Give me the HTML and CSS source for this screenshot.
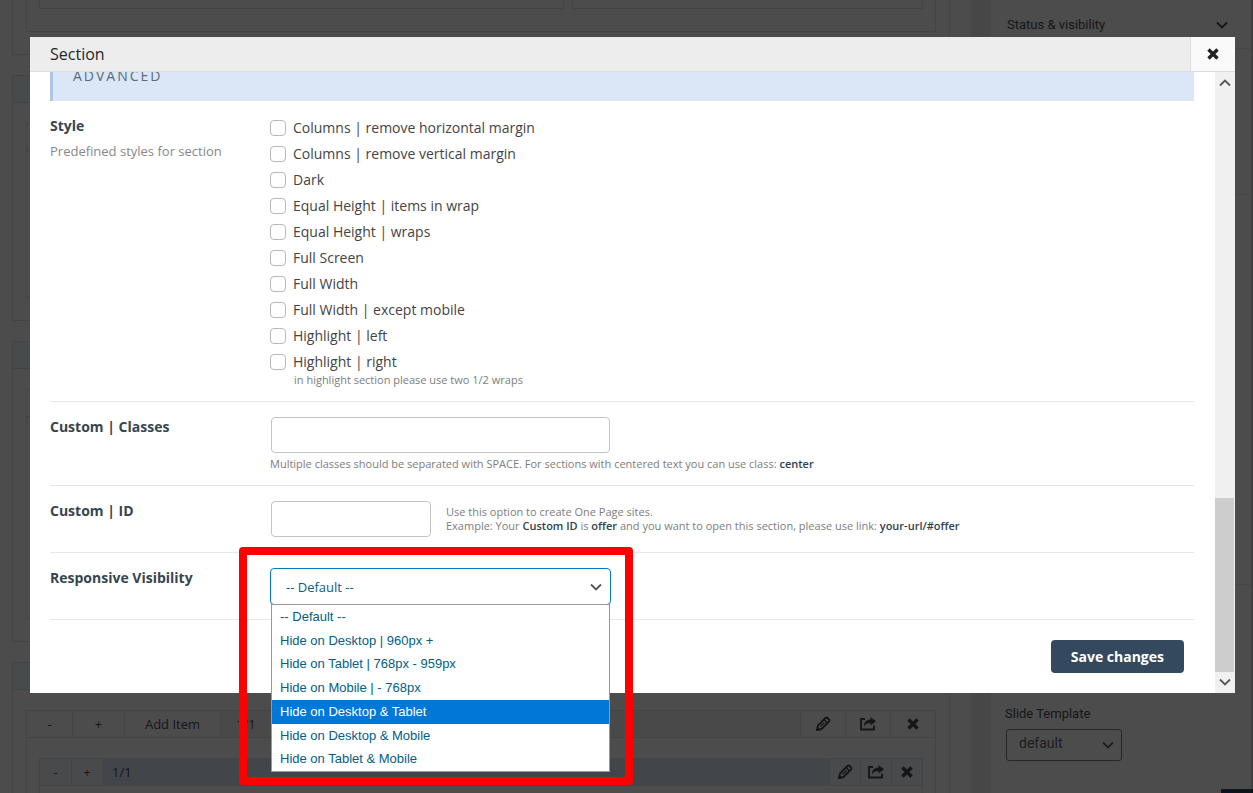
FILE: index.html
```html
<!DOCTYPE html>
<html lang="en">
<head>
<meta charset="utf-8">
<meta name="viewport" content="width=device-width, initial-scale=1">
<title>Section</title>
<link rel="stylesheet" href="styles.css">
</head>
<body>
<svg class="defs" aria-hidden="true">
  <symbol id="pencil" viewBox="0 0 16 16"><path fill="none" stroke="currentColor" stroke-width="1.800" stroke-linejoin="round" d="M2 14l1-4.500 7.500-7.500q1-1 2 0l1.500 1.500q1 1 0 2l-7.500 7.500z"/><path fill="none" stroke="currentColor" stroke-width="1.200" d="M9 3.500l3.500 3.500M5.500 10.500l4-4"/><path fill="currentColor" d="M1 15l1.200-4.500 3.500 3.500z"/></symbol>
  <symbol id="share" viewBox="0 0 16 16"><path fill="none" stroke="currentColor" stroke-width="1.800" d="M5 3H1v10.500h13v-4"/><path fill="currentColor" d="M10.500 1L16 5.200 10.500 9.400V7C7.500 7 5.500 7.800 4 10.500c0-4.300 2-6.500 6.500-6.900z"/></symbol>
  <symbol id="cross" viewBox="0 0 12 12"><path fill="none" stroke="currentColor" stroke-width="3.400" d="M1.500 1.500l9 9M10.500 1.500l-9 9"/></symbol>
  <symbol id="chevron" viewBox="0 0 12 8"><path fill="none" stroke="currentColor" stroke-width="1.800" d="M1 1.500l5 5 5-5"/></symbol>
</svg>

<div class="page">
  <main class="builder">
    <section class="block block-first"><div class="wrap"><div class="item item-wide"></div><div class="item"></div></div></section>
    <section class="block block-mid"><div class="block-head"></div><div class="wrap"><div class="wrap-head"></div></div></section>
    <section class="block block-tall"><div class="block-head"></div><div class="wrap"><div class="wrap-head"></div></div></section>
    <section class="block block-last">
      <div class="block-head"></div>
      <div class="wrap">
        <div class="toolbar wrap-bar">
          <button type="button">-</button>
          <button type="button">+</button>
          <button type="button" class="add">Add Item</button>
          <span class="size">1/1</span>
          <button type="button" aria-label="Edit"><svg class="icon"><use href="#pencil"/></svg></button>
          <button type="button" aria-label="Export"><svg class="icon"><use href="#share"/></svg></button>
          <button type="button" aria-label="Delete"><svg class="icon-x"><use href="#cross"/></svg></button>
        </div>
        <div class="item">
          <div class="toolbar item-bar">
            <button type="button">-</button>
            <button type="button">+</button>
            <span class="size">1/1</span>
            <button type="button" aria-label="Edit"><svg class="icon"><use href="#pencil"/></svg></button>
            <button type="button" aria-label="Export"><svg class="icon"><use href="#share"/></svg></button>
            <button type="button" aria-label="Delete"><svg class="icon-x"><use href="#cross"/></svg></button>
          </div>
        </div>
      </div>
    </section>
  </main>
  <aside class="sidebar">
    <button type="button" class="panel-toggle">Status &amp; visibility <svg class="chev"><use href="#chevron"/></svg></button>
    <div class="panel panel-short"></div>
    <div class="panel panel-long"></div>
    <div class="panel-field">
      <label for="template">Slide Template</label>
      <div class="template-box">
        <select id="template"><option>default</option></select>
        <svg class="chev"><use href="#chevron"/></svg>
      </div>
    </div>
    <div class="corner"></div>
  </aside>
</div>

<div class="modal" role="dialog" aria-labelledby="modal-title">
  <header class="modal-head">
    <h1 id="modal-title">Section</h1>
    <button type="button" class="close" aria-label="Close"><svg class="icon-x"><use href="#cross"/></svg></button>
  </header>
  <div class="modal-body">
    <form class="form">
      <h2 class="group-title">Advanced</h2>
      <div class="row row-style">
        <div class="row-label"><h3>Style</h3><p>Predefined styles for section</p></div>
        <div class="row-field">
          <ul class="checks">
            <li><label><input type="checkbox">Columns | remove horizontal margin</label></li>
            <li><label><input type="checkbox">Columns | remove vertical margin</label></li>
            <li><label><input type="checkbox">Dark</label></li>
            <li><label><input type="checkbox">Equal Height | items in wrap</label></li>
            <li><label><input type="checkbox">Equal Height | wraps</label></li>
            <li><label><input type="checkbox">Full Screen</label></li>
            <li><label><input type="checkbox">Full Width</label></li>
            <li><label><input type="checkbox">Full Width | except mobile</label></li>
            <li><label><input type="checkbox">Highlight | left</label></li>
            <li><label><input type="checkbox">Highlight | right</label></li>
          </ul>
          <p class="hint hint-indent">in highlight section please use two 1/2 wraps</p>
        </div>
      </div>
      <div class="row row-classes">
        <div class="row-label"><h3><label for="classes">Custom | Classes</label></h3></div>
        <div class="row-field">
          <input id="classes" type="text" class="text-input wide">
          <p class="hint hint-below">Multiple classes should be separated with SPACE. For sections with centered text you can use class: <b>center</b></p>
        </div>
      </div>
      <div class="row">
        <div class="row-label"><h3><label for="cid">Custom | ID</label></h3></div>
        <div class="row-field inline">
          <input id="cid" type="text" class="text-input narrow">
          <p class="hint">Use this option to create One Page sites.<br>Example: Your <b>Custom ID</b> is <b>offer</b> and you want to open this section, please use link: <b>your-url/#offer</b></p>
        </div>
      </div>
      <div class="row">
        <div class="row-label"><h3><label for="visibility">Responsive Visibility</label></h3></div>
        <div class="row-field">
          <div class="select-box">
            <select id="visibility"><option>-- Default --</option></select>
            <svg class="chev"><use href="#chevron"/></svg>
            <ul class="menu" role="listbox" aria-label="Responsive Visibility">
              <li role="option">-- Default --</li>
              <li role="option">Hide on Desktop | 960px +</li>
              <li role="option">Hide on Tablet | 768px - 959px</li>
              <li role="option">Hide on Mobile | - 768px</li>
              <li role="option" class="active" aria-selected="true">Hide on Desktop &amp; Tablet</li>
              <li role="option">Hide on Desktop &amp; Mobile</li>
              <li role="option">Hide on Tablet &amp; Mobile</li>
            </ul>
            <div class="marker"></div>
          </div>
        </div>
      </div>
      <div class="actions"><button type="button" class="save">Save changes</button></div>
    </form>
    <div class="scrollbar" aria-hidden="true">
      <svg class="chev up"><use href="#chevron"/></svg>
      <div class="track"><div class="thumb"></div></div>
      <svg class="chev"><use href="#chevron"/></svg>
    </div>
  </div>
</div>
</body>
</html>
```
FILE: styles.css
```css
* { box-sizing: border-box; }
body {
  margin: 0;
  height: 100vh;
  overflow: hidden;
  background: #4c4c4c;
  font: 14px/20px "Open Sans", sans-serif;
  color: #444;
}
h1, h2, h3, p, ul { margin: 0; padding: 0; font-weight: 400; }
ul { list-style: none; }
button, input, select { font: inherit; color: inherit; margin: 0; }
b { font-weight: 600; color: #2f3f4d; }
.defs { position: absolute; width: 0; height: 0; }
.icon { width: 16px; height: 16px; display: block; }
.icon-x { width: 12px; height: 12px; display: block; }
.chev { width: 12px; height: 8px; display: block; }

/* Dimmed editor behind the dialog */
.page { display: flex; height: 100%; overflow: hidden; color: #161616; }
.builder { flex: 1; padding: 0 21px 0 12px; }
.block { border: 1px solid #444; padding: 0 13px; margin-bottom: 20px; }
.wrap, .item { border: 1px solid #444; }
.block-first { height: 55px; border-top: 0; }
.block-first .wrap { display: flex; gap: 8px; height: 32px; border-top: 0; padding: 0 12px; }
.block-first .item { flex: 2; height: 9px; border-top: 0; }
.block-first .item-wide { flex: 3; }
.block-mid { height: 246px; }
.block-mid .wrap { height: 175px; }
.block-tall { height: 301px; }
.block-tall .wrap { height: 230px; }
.block-last { height: 300px; }
.block-head { height: 27px; margin: 0 -13px 20px; background: #464b4b; border-bottom: 1px solid #404444; }
.wrap-head { height: 27px; border-bottom: 1px solid #444; }
.block-last .wrap { height: 260px; }
.block-last .item { height: 200px; margin: 20px 12px 0; }
.toolbar { display: flex; height: 27px; border-bottom: 1px solid #444; }
.toolbar button {
  display: flex;
  align-items: center;
  justify-content: center;
  padding: 0;
  width: 45px;
  border: 0;
  border-left: 1px solid #444;
  background: none;
  font-size: 13px;
}
.toolbar button:first-child { border-left: 0; }
.toolbar .size { flex: 1; padding: 3px 15px; background: #494949; border-left: 1px solid #444; font-size: 13px; }
.wrap-bar button:nth-child(2) { width: 52px; }
.wrap-bar .add { width: 96px; }
.item-bar { background: #494a4c; }
.item-bar button { width: 31px; }
.item-bar .size { background: #424549; padding-left: 9px; border-color: #424549; }
.sidebar { position: relative; width: 282px; border-left: 20px solid #474747; border-right: 2px solid #404040; font-family: Roboto, sans-serif; font-size: 13px; }
.panel-toggle {
  display: flex;
  align-items: center;
  justify-content: space-between;
  width: 100%;
  height: 49px;
  padding: 1px 23px 0 16px;
  border: 0;
  border-bottom: 1px solid #464646;
  background: none;
}
.panel { border-bottom: 1px solid #464646; }
.panel-short { height: 146px; }
.panel-long { height: 390px; }
.panel-field { padding: 119px 14px 0; }
.panel-field label { display: block; line-height: 20px; }
.template-box { position: relative; width: 116px; margin: 5px 0 0 1px; font-size: 14px; color: #1b1d1f; }
.template-box select { appearance: none; display: block; width: 100%; height: 32px; padding: 0 12px 4px; background: none; border: 1px solid #252729; border-radius: 3px; }
.template-box .chev { position: absolute; right: 8px; top: 12px; }
.corner { position: absolute; right: -2px; bottom: 0; width: 32px; height: 4px; background: #0d151b; }

/* Dialog */
.modal { position: absolute; inset: 37px 18px 100px 30px; display: flex; flex-direction: column; background: #fff; }
.modal-head { display: flex; height: 35px; flex: none; background: #ededed; border-bottom: 1px solid #ddd; }
.modal-head h1 { flex: 1; padding-left: 20px; font-size: 16px; line-height: 34px; color: #23282d; }
.close { display: flex; align-items: center; justify-content: center; width: 45px; padding: 0; border: 0; border-left: 1px solid #ddd; background: #fafafa; color: #222; }
.modal-body { flex: 1; display: flex; min-height: 0; }
.form { flex: 1; padding: 0 21px 0 20px; }
.group-title {
  height: 29px;
  padding-left: 20px;
  border-left: 3px solid #b0c4e6;
  background: #dbe7f7;
  color: #5a6b7a;
  font-size: 14px;
  line-height: 8px;
  letter-spacing: 2px;
  text-transform: uppercase;
  overflow: hidden;
}
.row { display: flex; padding: 15px 0; border-bottom: 1px solid #e8e8e8; }
.row-label { width: 220px; flex: none; }
.row-label h3 { font-size: 14px; font-weight: 700; line-height: 20px; color: #36454f; }
.row-label p { margin-top: 5px; font-size: 13px; color: #888; }
.row-field { flex: 1; }
.row-style, .row-classes { padding-bottom: 14px; }
.checks { margin: -1px 0 -2px; }
.checks label { display: flex; align-items: center; height: 26px; gap: 7px; }
.checks input { appearance: none; width: 16px; height: 16px; border: 1px solid #b4b9be; border-radius: 4px; background: #fff; }
.hint { font-size: 11px; line-height: 14px; color: #7d7d7d; }
.hint-indent { padding-left: 24px; }
.hint-below { margin-top: 4px; }
.text-input { display: block; height: 36px; margin-left: 1px; border: 1px solid #c4c4c4; border-radius: 4px; background: #fff; padding: 0 10px; }
.wide { width: 339px; }
.narrow { width: 160px; }
.inline { display: flex; align-items: center; gap: 15px; }
.select-box { position: relative; width: 341px; height: 36px; }
.select-box select { appearance: none; display: block; width: 100%; height: 37px; padding: 0 15px; border: 1px solid #007cba; border-radius: 4px; background: #fff; color: #016087; font-size: 13px; }
.select-box .chev { position: absolute; right: 9px; top: 15px; color: #555; }
.menu { position: absolute; z-index: 2; left: 1px; right: 1px; top: 36px; height: 168px; display: flex; flex-direction: column; border: 1px solid #999; background: #fff; color: #016087; font: 13px/24px "Liberation Sans", Arial, sans-serif; }
.menu li { flex: 1; min-height: 0; padding-left: 8px; }
.menu .active { background: #0078d7; color: #fff; }
.marker { position: absolute; left: -31px; right: -22px; top: -21px; height: 238px; border: 8px solid #f00; border-radius: 4px; pointer-events: none; }
.actions { display: flex; justify-content: flex-end; padding: 20px 10px; }
.save { height: 33px; padding: 0 20px; border: 0; border-radius: 4px; background: #34495e; color: #fff; font-weight: 700; }
.scrollbar { display: flex; flex-direction: column; align-items: center; width: 20px; padding: 7px 0; background: #f0f0f0; color: #555; }
.track { flex: 1; width: 100%; margin: 6px 0; display: flex; flex-direction: column; justify-content: flex-end; padding-right: 1px; }
.thumb { height: 30%; background: #cdcdcd; }
.up { transform: rotate(180deg); }
```
